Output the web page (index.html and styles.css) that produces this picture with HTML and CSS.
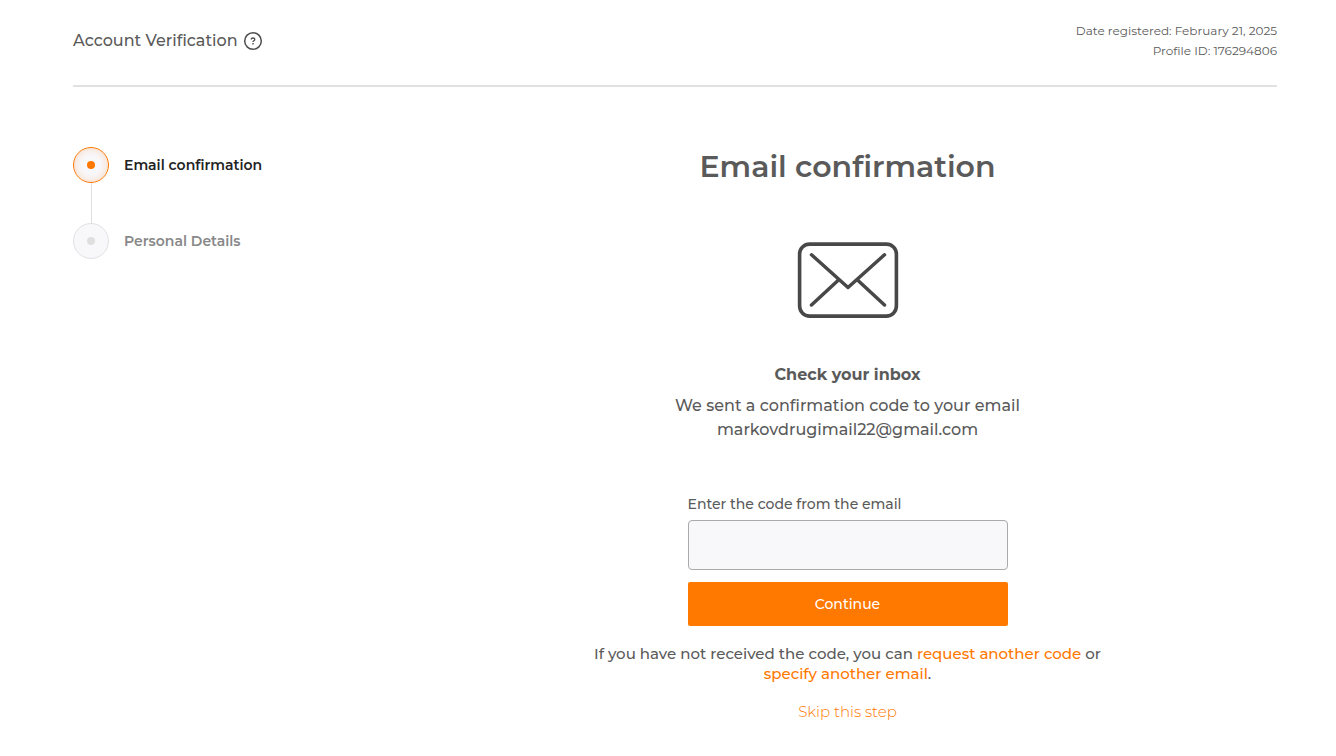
FILE: index.html
```html
<!DOCTYPE html>
<html lang="en">
<head>
<meta charset="utf-8">
<meta name="viewport" content="width=device-width, initial-scale=1">
<title>Account Verification</title>
<link rel="stylesheet" href="styles.css">
</head>
<body>
<div class="page">
  <header class="header">
    <div class="header-title">
      <span>Account Verification</span>
      <button class="help" type="button" aria-label="Help">
        <svg width="20" height="20" viewBox="0 0 20 20" fill="none" stroke="currentColor" aria-hidden="true">
          <circle cx="10" cy="10" r="8.3" stroke-width="1.5"/>
          <path d="M8.2 8.5C8.2 7.5 9 7 10 7s1.8.6 1.8 1.5c0 1.2-1.8 1.2-1.8 2.4" stroke-width="1.3"/>
          <path d="M10 12.1v1.3" stroke-width="1.4"/>
        </svg>
      </button>
    </div>
    <div class="header-meta">
      <div>Date registered: February 21, 2025</div>
      <div>Profile ID: 176294806</div>
    </div>
  </header>
  <div class="body">
    <ol class="steps">
      <li class="step step-active"><span class="step-mark"></span><span>Email confirmation</span></li>
      <li class="step"><span class="step-mark"></span><span>Personal Details</span></li>
    </ol>
    <main class="main">
      <h1 class="title">Email confirmation</h1>
      <svg class="envelope" width="102" height="76" viewBox="0 0 102 76" fill="none" stroke="currentColor" stroke-width="3.6" stroke-linecap="round" stroke-linejoin="round" aria-hidden="true">
        <rect x="2.6" y="2.1" width="96.8" height="72" rx="10"/>
        <path d="M14.5 12.8 51 45.5l36.5-32.7M41.5 38 14.5 63M60.5 38l27 25" stroke-width="3.5"/>
      </svg>
      <h2 class="subtitle">Check your inbox</h2>
      <p class="message">We sent a confirmation code to your email<br>markovdrugimail22@gmail.com</p>
      <form class="form">
        <label class="label" for="code">Enter the code from the email</label>
        <input class="input" id="code" name="code" type="text" autocomplete="one-time-code">
        <button class="submit" type="submit">Continue</button>
      </form>
      <p class="hint">If you have not received the code, you can <a href="#">request another code</a> or <a href="#">specify another email</a>.</p>
      <a class="skip" href="#">Skip this step</a>
    </main>
  </div>
</div>
</body>
</html>
```
FILE: styles.css
```css
* {
  box-sizing: border-box;
}

body {
  margin: 0;
  background: #fff;
  color: #5a5a5a;
  font-family: Montserrat, Inter, sans-serif;
  font-weight: 500;
}

h1, h2, p, ol {
  margin: 0;
  padding: 0;
}

a {
  color: #ff7800;
  text-decoration: none;
}

.page {
  padding: 20px 59px 32px 73px;
}

.header {
  display: flex;
  justify-content: space-between;
  align-items: flex-end;
  padding-bottom: 24px;
  border-bottom: 2px solid #e1e1e1;
}

.header-title {
  display: flex;
  align-items: center;
  gap: 5px;
  font-size: 16px;
  line-height: 41px;
}

.help {
  display: flex;
  padding: 0;
  border: 0;
  background: none;
  color: #4d4d4d;
}

.header-meta {
  font-size: 12px;
  line-height: 20px;
  font-weight: 400;
  text-align: right;
}

.body {
  display: grid;
  grid-template-columns: 345px 1fr;
  padding-top: 60px;
}

.steps {
  display: grid;
  gap: 40px;
  align-content: start;
  list-style: none;
}

.step {
  position: relative;
  display: flex;
  align-items: center;
  gap: 15px;
  color: #888;
  font-size: 14px;
  line-height: 20px;
  font-weight: 600;
}

.step-mark {
  display: flex;
  align-items: center;
  justify-content: center;
  width: 36px;
  height: 36px;
  border: 1px solid #e1e1e3;
  border-radius: 50%;
  background: #f8f8fb;
}

.step-mark::before {
  content: "";
  width: 8px;
  height: 8px;
  border-radius: 50%;
  background: #dfdfdf;
}

.step-active {
  color: #222;
}

.step-active .step-mark {
  border-color: #ff7800;
  box-shadow: inset 0 0 8px rgba(255, 120, 0, 0.25);
}

.step-active .step-mark::before {
  background: #ff7800;
}

.step + .step::before {
  content: "";
  position: absolute;
  bottom: 100%;
  left: 18px;
  width: 1px;
  height: 40px;
  background: #dedede;
}

.main {
  display: flex;
  flex-direction: column;
  align-items: center;
  text-align: center;
}

.title {
  font-size: 30px;
  line-height: 40px;
  font-weight: 600;
}

.envelope {
  margin-top: 55px;
  color: #484848;
}

.subtitle {
  margin-top: 45px;
  font-size: 16px;
  line-height: 24px;
  font-weight: 700;
}

.message {
  margin-top: 7px;
  font-size: 16px;
  line-height: 24px;
}

.form {
  display: flex;
  flex-direction: column;
  width: 100%;
  max-width: 320px;
  margin-top: 52px;
  text-align: left;
}

.label {
  font-size: 14px;
  line-height: 20px;
}

.input {
  height: 50px;
  margin-top: 6px;
  padding: 0 16px;
  border: 1px solid #aaa;
  border-radius: 4px;
  background: #f8f8fb;
  color: #5a5a5a;
  font: inherit;
}

.submit {
  height: 44px;
  margin-top: 12px;
  border: 0;
  border-radius: 2px;
  background: #ff7800;
  color: #fff;
  font-family: inherit;
  font-size: 14px;
  font-weight: 500;
}

.hint {
  max-width: 520px;
  margin-top: 18px;
  font-size: 15px;
  line-height: 20px;
}

.skip {
  margin-top: 18px;
  font-size: 15px;
  line-height: 20px;
  font-weight: 300;
}
```
